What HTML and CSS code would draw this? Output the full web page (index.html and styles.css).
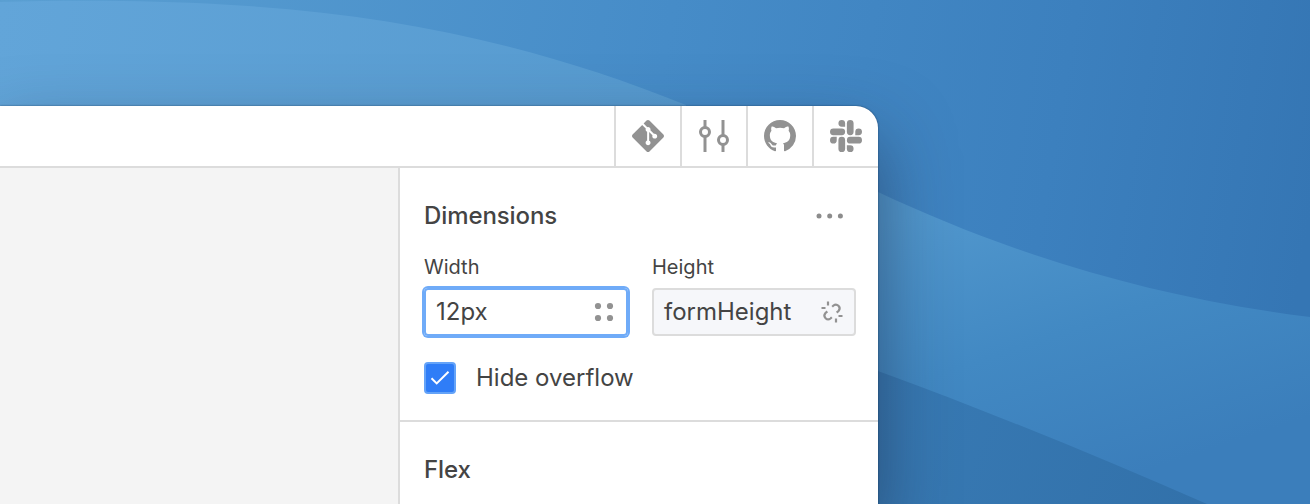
FILE: index.html
```
<!DOCTYPE html>
<html lang="en">

<head>
    <meta charset="utf-8">
    <title>Editor</title>
    <link rel="stylesheet" href="styles.css">
</head>

<body>
    <svg class="wallpaper" viewBox="0 0 1310 504" aria-hidden="true">
        <defs>
            <linearGradient id="sky" x1="0" y1="0" x2="1310" y2="220" gradientUnits="userSpaceOnUse">
                <stop offset="0" stop-color="#5a9fd2" />
                <stop offset="0.5" stop-color="#468cc8" />
                <stop offset="0.8" stop-color="#3c80be" />
                <stop offset="1" stop-color="#3576b4" />
            </linearGradient>
            <linearGradient id="hill" x1="0" y1="0" x2="686" y2="106" gradientUnits="userSpaceOnUse">
                <stop offset="0" stop-color="#62a5d9" />
                <stop offset="1" stop-color="#569acf" />
            </linearGradient>
            <linearGradient id="wave" x1="960" y1="200" x2="1060" y2="500" gradientUnits="userSpaceOnUse">
                <stop offset="0" stop-color="#5197cd" />
                <stop offset="0.5" stop-color="#4289c3" />
                <stop offset="1" stop-color="#3b7ebb" />
            </linearGradient>
            <linearGradient id="deep" x1="880" y1="380" x2="1200" y2="504" gradientUnits="userSpaceOnUse">
                <stop offset="0" stop-color="#387ab4" />
                <stop offset="1" stop-color="#3271aa" />
            </linearGradient>
        </defs>
        <rect width="1310" height="504" fill="url(#sky)" />
        <path d="M0 2C70 0 150 0 223 4.5C400 14 545 48 686 105V200H0Z" fill="url(#hill)" />
        <path d="M800 150L878 192C1010 254 1150 297 1310 317V504H800Z" fill="url(#wave)" />
        <path d="M800 343L878 371C990 412 1100 457 1207 504H800Z" fill="url(#deep)" />
    </svg>

    <div class="window">
        <div class="toolbar">
            <button class="tool" aria-label="Git">
                <svg width="32" height="32" viewBox="0 0 24 24" fill="currentColor">
                    <path d="M23.546 10.93L13.067.452c-.604-.603-1.582-.603-2.188 0L8.708 2.627l2.76 2.76c.645-.215 1.379-.07 1.889.441.516.515.658 1.258.438 1.9l2.658 2.66c.645-.223 1.387-.078 1.9.435.721.72.721 1.884 0 2.604-.719.719-1.881.719-2.6 0-.539-.541-.674-1.337-.404-1.996L12.86 8.955v6.525c.176.086.342.203.488.348.713.721.713 1.883 0 2.6-.719.721-1.889.721-2.609 0-.719-.719-.719-1.879 0-2.598.182-.18.387-.316.605-.406V8.835c-.217-.091-.424-.222-.6-.401-.545-.545-.676-1.342-.396-2.009L7.636 3.7.45 10.881c-.6.605-.6 1.584 0 2.189l10.48 10.477c.604.604 1.582.604 2.186 0l10.43-10.43c.605-.603.605-1.582 0-2.187" />
                </svg>
            </button>
            <button class="tool" aria-label="Settings">
                <svg width="32" height="32" viewBox="0 0 32 32" fill="none" stroke="currentColor" stroke-width="3">
                    <path d="M7 0v8M7 16v16M25 0v16M25 24v8" />
                    <circle cx="7" cy="12" r="4.5" />
                    <circle cx="25" cy="20" r="4.5" />
                </svg>
            </button>
            <button class="tool" aria-label="GitHub">
                <svg width="32" height="32" viewBox="0 0 16 16" fill="currentColor">
                    <path d="M8 0C3.58 0 0 3.58 0 8c0 3.54 2.29 6.53 5.47 7.59.4.07.55-.17.55-.38 0-.19-.01-.82-.01-1.49-2.01.37-2.53-.49-2.69-.94-.09-.23-.48-.94-.82-1.13-.28-.15-.68-.52-.01-.53.63-.01 1.08.58 1.23.82.72 1.21 1.87.87 2.33.66.07-.52.28-.87.51-1.07-1.78-.2-3.64-.89-3.64-3.95 0-.87.31-1.59.82-2.15-.08-.2-.36-1.02.08-2.12 0 0 .67-.21 2.2.82.64-.18 1.32-.27 2-.27s1.36.09 2 .27c1.53-1.04 2.2-.82 2.2-.82.44 1.1.16 1.92.08 2.12.51.56.82 1.27.82 2.15 0 3.07-1.87 3.75-3.65 3.95.29.25.54.73.54 1.48 0 1.07-.01 1.93-.01 2.2 0 .21.15.46.55.38A8.01 8.01 0 0 0 16 8c0-4.42-3.58-8-8-8z" />
                </svg>
            </button>
            <button class="tool" aria-label="Slack">
                <svg width="32" height="32" viewBox="0 0 24 24" fill="currentColor">
                    <path d="M5.042 15.165a2.528 2.528 0 0 1-2.52 2.523A2.528 2.528 0 0 1 0 15.165a2.527 2.527 0 0 1 2.522-2.52h2.52v2.52zM6.313 15.165a2.527 2.527 0 0 1 2.521-2.52 2.527 2.527 0 0 1 2.521 2.52v6.313A2.528 2.528 0 0 1 8.834 24a2.528 2.528 0 0 1-2.521-2.522v-6.313zM8.834 5.042a2.528 2.528 0 0 1-2.521-2.52A2.528 2.528 0 0 1 8.834 0a2.528 2.528 0 0 1 2.521 2.522v2.52H8.834zM8.834 6.313a2.528 2.528 0 0 1 2.521 2.521 2.528 2.528 0 0 1-2.521 2.521H2.522A2.528 2.528 0 0 1 0 8.834a2.528 2.528 0 0 1 2.522-2.521h6.312zM18.956 8.834a2.528 2.528 0 0 1 2.522-2.521A2.528 2.528 0 0 1 24 8.834a2.528 2.528 0 0 1-2.522 2.521h-2.522V8.834zM17.688 8.834a2.528 2.528 0 0 1-2.523 2.521 2.527 2.527 0 0 1-2.52-2.521V2.522A2.527 2.527 0 0 1 15.165 0a2.528 2.528 0 0 1 2.523 2.522v6.312zM15.165 18.956a2.528 2.528 0 0 1 2.523 2.522A2.528 2.528 0 0 1 15.165 24a2.527 2.527 0 0 1-2.52-2.522v-2.522h2.52zM15.165 17.688a2.527 2.527 0 0 1-2.52-2.523 2.526 2.526 0 0 1 2.52-2.52h6.313A2.527 2.527 0 0 1 24 15.165a2.528 2.528 0 0 1-2.522 2.523h-6.313z" />
                </svg>
            </button>
        </div>

        <div class="workspace">
            <div class="canvas"></div>
            <div class="inspector">
                <div class="section">
                    <div class="section-header">
                        <h2>Dimensions</h2>
                        <svg class="more" width="28" height="6" viewBox="0 0 28 6" fill="currentColor">
                            <circle cx="3" cy="3" r="2.5" />
                            <circle cx="13.7" cy="3" r="2.5" />
                            <circle cx="24.4" cy="3" r="2.5" />
                        </svg>
                    </div>
                    <div class="fields">
                        <div class="field">
                            <div class="label">Width</div>
                            <div class="input focused">
                                <span>12px</span>
                                <svg width="24" height="24" viewBox="0 0 24 24" fill="currentColor">
                                    <circle cx="6" cy="6" r="3.1" />
                                    <circle cx="18" cy="6" r="3.1" />
                                    <circle cx="6" cy="18" r="3.1" />
                                    <circle cx="18" cy="18" r="3.1" />
                                </svg>
                            </div>
                        </div>
                        <div class="field">
                            <div class="label">Height</div>
                            <div class="input bound">
                                <span>formHeight</span>
                                <svg width="24" height="24" viewBox="0 0 24 24" fill="none" stroke="currentColor" stroke-width="2.2">
                                    <path d="M8 1.5v4M1.5 8h4M18.5 16h4M16 18.5v4" />
                                    <path d="M12.2 6.7l1.3-1.2a3.7 3.7 0 0 1 5.2 5.2l-2 1.9M11.8 17.3l-1.3 1.2a3.7 3.7 0 0 1-5.2-5.2l2-1.9" />
                                </svg>
                            </div>
                        </div>
                    </div>
                    <div class="check-row">
                        <div class="checkbox">
                            <svg width="28" height="28" viewBox="0 0 28 28" fill="none" stroke="#fff" stroke-width="2">
                                <path d="M5.5 14.3l5.2 5.1L22.5 7.8" />
                            </svg>
                        </div>
                        <span>Hide overflow</span>
                    </div>
                </div>
                <div class="section">
                    <div class="section-header">
                        <h2>Flex</h2>
                    </div>
                </div>
            </div>
        </div>
    </div>
</body>

</html>
```
FILE: styles.css
```
* {
    box-sizing: border-box;
}

body {
    margin: 0;
    height: 504px;
    padding-top: 106px;
    overflow: hidden;
    font-family: Inter, "Liberation Sans", sans-serif;
    font-size: 24px;
    color: #444;
}

svg {
    display: block;
    flex: none;
}

.wallpaper {
    position: absolute;
    top: 0;
    left: 0;
    width: 1310px;
    height: 504px;
    z-index: -1;
}

.window {
    display: flex;
    flex-direction: column;
    width: 878px;
    height: 398px;
    background-color: #fff;
    border-top-right-radius: 22px;
    box-shadow: 0 0 2px rgba(0, 20, 50, 0.6), 0 34px 70px 2px rgba(25, 35, 60, 0.5);
    overflow: hidden;
}

.toolbar {
    display: flex;
    justify-content: flex-end;
    height: 62px;
    border-bottom: 2px solid #dcdcdc;
}

.tool {
    display: flex;
    align-items: center;
    justify-content: center;
    width: 66px;
    height: 60px;
    padding: 0;
    border: none;
    border-left: 2px solid #dcdcdc;
    background: none;
    color: #929292;
}

.workspace {
    display: flex;
    flex: 1;
}

.canvas {
    flex: 1;
    background-color: #f4f4f4;
}

.inspector {
    width: 480px;
    border-left: 2px solid #dcdcdc;
}

.section {
    padding: 32px 22px 26px 24px;
    border-bottom: 2px solid #dcdcdc;
}

.section:last-child {
    padding-bottom: 0;
    border-bottom: none;
}

.section-header {
    display: flex;
    align-items: center;
    justify-content: space-between;
    height: 32px;
}

h2 {
    margin: 0;
    font-size: 24px;
    font-weight: 500;
    line-height: 32px;
    letter-spacing: -0.1px;
}

.more {
    margin-right: 12px;
    color: #8c8c8c;
}

.fields {
    display: flex;
    gap: 24px;
    margin-top: 22px;
}

.field {
    width: 204px;
}

.label {
    font-size: 20px;
    line-height: 26px;
}

.input {
    display: flex;
    align-items: center;
    justify-content: space-between;
    height: 48px;
    margin-top: 8px;
    padding: 0 10px;
    border: 2px solid #dcdcdc;
    border-radius: 4px;
}

.input span,
.check-row span {
    padding-bottom: 2px;
}

.input svg {
    color: #929292;
}

.focused {
    border-color: #6fabf8;
    box-shadow: 0 0 0 2px #6fabf8;
}

.bound {
    background-color: #f6f7fa;
}

.check-row {
    display: flex;
    align-items: center;
    gap: 20px;
    margin-top: 26px;
}

.checkbox {
    width: 32px;
    height: 32px;
    border: 2px solid #64a3f8;
    border-radius: 4px;
    background-color: #2f7df7;
}
```
